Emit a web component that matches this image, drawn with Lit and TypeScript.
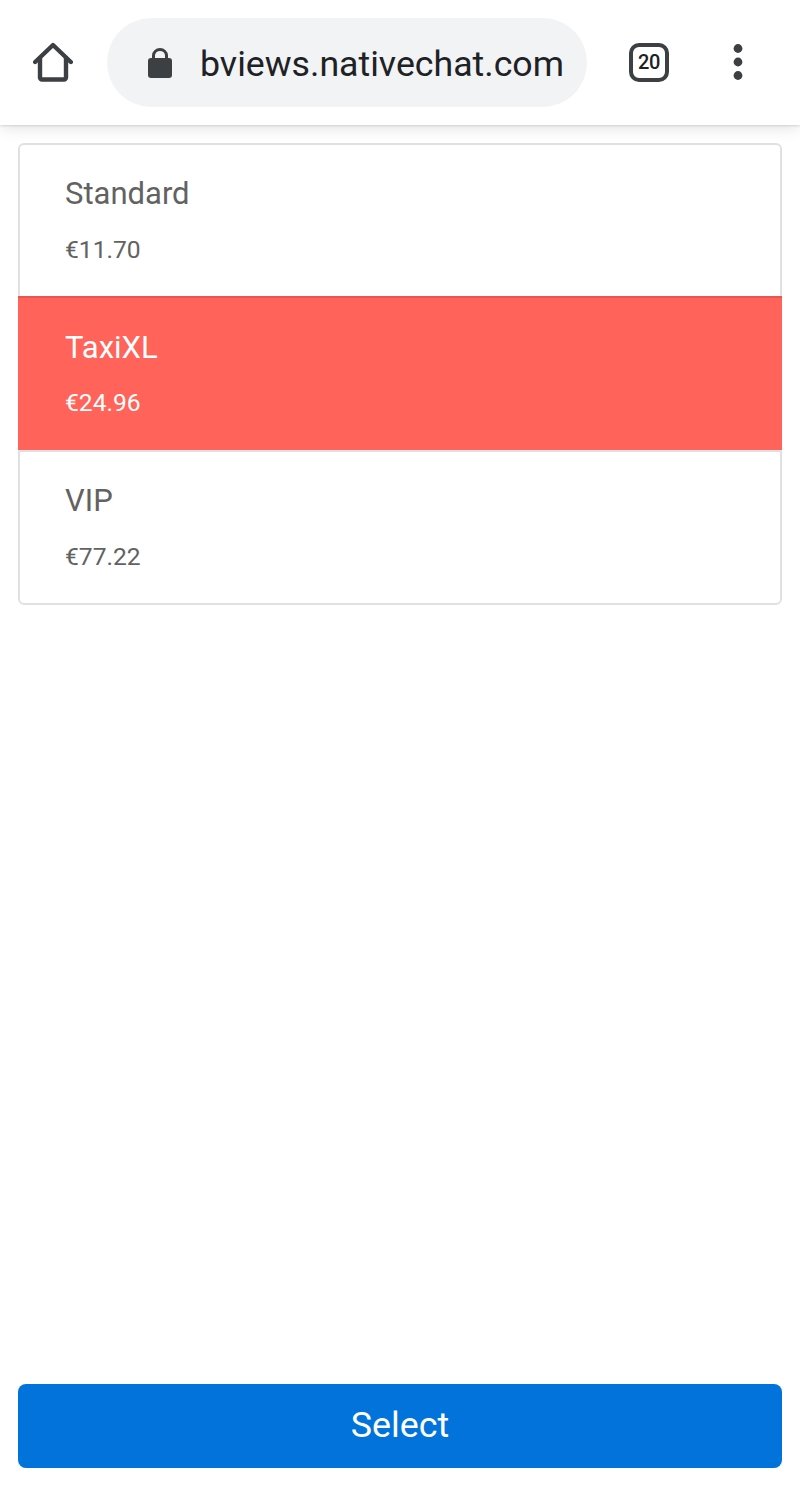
import { LitElement, html, css } from "lit";
import { customElement } from "lit/decorators.js";

@customElement("app-root")
export class AppRoot extends LitElement {
  static styles = css`
    :host {
      display: flex;
      flex-direction: column;
      width: 800px;
      height: 1486px;
      background: #fff;
      font-family: Roboto, "Liberation Sans", sans-serif;
      overflow: hidden;
    }
    .bar {
      height: 125px;
      flex: none;
      display: flex;
      align-items: center;
      background: #fff;
      box-shadow: 0 1px 2px rgba(0,0,0,.12), 0 4px 14px rgba(0,0,0,.1);
      position: relative;
      padding-bottom: 1px;
      box-sizing: border-box;
    }
    .home { width: 40px; height: 40px; margin-left: 33px; flex: none; }
    .url {
      margin-left: 34px;
      width: 480px;
      height: 89px;
      margin-top: 1px;
      border-radius: 45px;
      background: #f1f3f4;
      display: flex;
      align-items: center;
      flex: none;
    }
    .lock { width: 24px; height: 30px; margin-left: 41px; flex: none; }
    .host {
      margin-left: 28px;
      padding-top: 3px;
      font-size: 35.7px;
      color: #202124;
      white-space: nowrap;
    }
    .tabs {
      margin-left: 42px;
      width: 40px;
      height: 39px;
      box-sizing: border-box;
      border: 4.5px solid #3c4043;
      border-radius: 10px;
      display: flex;
      align-items: center;
      justify-content: center;
      font-size: 20px;
      font-weight: 500;
      letter-spacing: -0.3px;
      color: #202124;
      flex: none;
    }
    .more { width: 12px; height: 40px; margin-left: 63px; flex: none; }
    .main {
      flex: 1;
      display: flex;
      flex-direction: column;
      padding: 18px 18px 18px;
      min-height: 0;
    }
    .list {
      border: 2px solid #e0e0e0;
      border-radius: 6px;
      display: flex;
      flex-direction: column;
      height: 462px;
      box-sizing: border-box;
    }
    .item {
      flex: 1;
      box-sizing: border-box;
      padding: 32px 45px 0;
      color: #626262;
    }
    .item + .item { border-top: 2px solid #e0e0e0; }
    .item.sel {
      background: #ff6359;
      color: #fff;
      margin: 0 -2px;
      padding-left: 47px;
      padding-top: 33px;
      border-top: 2px solid #e8574e;
    }
    .item.sel .price { margin-top: 24px; }
    .item.sel + .item { border-top: 2px solid #e0e0e0; }
    .name { font-size: 31px; line-height: 34px; }
    .price { font-size: 24.6px; line-height: 28px; margin-top: 25px; }
    .grow { flex: 1; }
    .select {
      height: 84px;
      border: none;
      border-radius: 8px;
      background: #0273da;
      color: #fff;
      padding: 0 0 2px;
      font: 400 35.8px Roboto, "Liberation Sans", sans-serif;
      flex: none;
    }
  `;

  render() {
    const items = [
      { n: "Standard", p: "€11.70" },
      { n: "TaxiXL", p: "€24.96", s: true },
      { n: "VIP", p: "€77.22" },
    ];
    return html`
      <div class="bar">
        <svg class="home" viewBox="0 0 40 40" fill="none" stroke="#3c4043" stroke-width="4.4" stroke-linejoin="round" stroke-linecap="round">
          <path d="M2.2 20 L20 3 L37.8 20" />
          <path d="M7 16 V35.5 a2 2 0 0 0 2 2 H31 a2 2 0 0 0 2 -2 V16" />
        </svg>
        <div class="url">
          <svg class="lock" viewBox="0 0 24 30">
            <path fill="none" stroke="#3c4043" stroke-width="3" d="M5.5 12 V7.5 a6.5 6 0 0 1 13 0 V12" />
            <rect x="0" y="10" width="24" height="20" rx="3" fill="#3c4043" />
          </svg>
          <span class="host">bviews.nativechat.com</span>
        </div>
        <div class="tabs">20</div>
        <svg class="more" viewBox="0 0 12 40" fill="#3c4043">
          <circle cx="6" cy="6.5" r="4.4" /><circle cx="6" cy="20" r="4.4" /><circle cx="6" cy="33.5" r="4.4" />
        </svg>
      </div>
      <div class="main">
        <div class="list">
          ${items.map(
            (i) => html`<div class="item ${i.s ? "sel" : ""}">
              <div class="name">${i.n}</div>
              <div class="price">${i.p}</div>
            </div>`
          )}
        </div>
        <div class="grow"></div>
        <button class="select">Select</button>
      </div>
    `;
  }
}
